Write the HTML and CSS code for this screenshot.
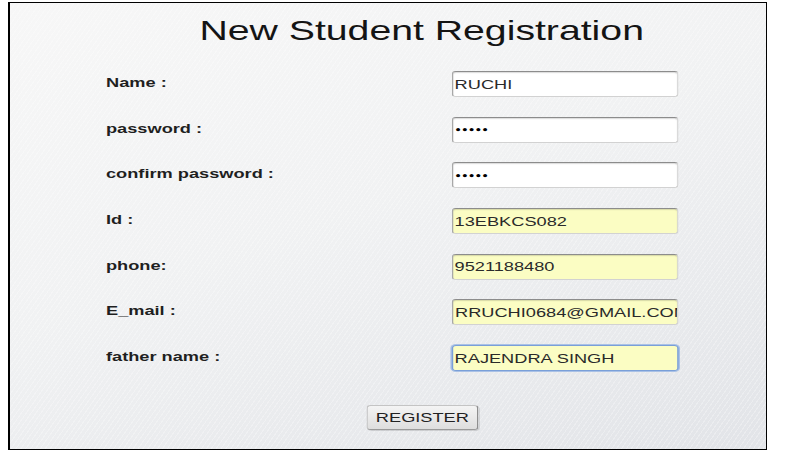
FILE: index.html
```html
<!DOCTYPE html>
<html>
<head>
<meta charset="utf-8">
<title>New Student Registration</title>
<link rel="stylesheet" href="styles.css">
</head>
<body>
<div class="box">
  <div class="sheet">
    <h1 class="title">New Student Registration</h1>
    <form class="form">
      <div class="row"><label class="label">Name :</label><input class="field" type="text" value="RUCHI"></div>
      <div class="row"><label class="label">password :</label><input class="field" type="password" value="12345"></div>
      <div class="row"><label class="label">confirm password :</label><input class="field" type="password" value="12345"></div>
      <div class="row"><label class="label">Id :</label><input class="field filled" type="text" value="13EBKCS082"></div>
      <div class="row"><label class="label">phone:</label><input class="field filled" type="text" value="9521188480"></div>
      <div class="row"><label class="label">E_mail :</label><input class="field filled" type="text" value="RRUCHI0684@GMAIL.COM"></div>
      <div class="row"><label class="label">father name :</label><input class="field filled focused" type="text" value="RAJENDRA SINGH"></div>
      <div class="actions"><button class="btn" type="button">REGISTER</button></div>
    </form>
  </div>
</div>
</body>
</html>
```

FILE: styles.css
```css
html, body {
  margin: 0;
  padding: 0;
  background: #ffffff;
}

body {
  font-family: "Liberation Sans", Arial, sans-serif;
}

.box {
  margin: 2px 0 0 8px;
  width: 756px;
  height: 446px;
  border: 1px solid #000;
  border-left-width: 2px;
  background:
    repeating-linear-gradient(125deg, rgba(255,255,255,0.28) 0 1px, rgba(255,255,255,0) 1px 4px),
    linear-gradient(160deg, #f7f7f7 0%, #f1f2f3 45%, #e2e4e8 100%);
  overflow: hidden;
}

.sheet {
  margin-left: 96px;
  width: 451px;
  transform: scaleX(1.4);
  transform-origin: 0 0;
}

.title {
  margin: 11px 0 0 0;
  font-size: 28px;
  line-height: 34px;
  font-weight: normal;
  color: #141414;
  text-align: center;
}

.form {
  margin: 23px 0 0 0;
  display: flex;
  flex-direction: column;
  gap: 19.7px;
}

.row {
  display: grid;
  grid-template-columns: 247px 162px;
  height: 26px;
  align-items: center;
}

.label {
  font-size: 13px;
  line-height: 15px;
  font-weight: bold;
  color: #1f1f1f;
  padding-bottom: 3px;
}

.field {
  box-sizing: border-box;
  width: 162px;
  height: 26px;
  margin: 0;
  padding: 0 0 0 1px;
  font-family: "Liberation Sans", Arial, sans-serif;
  font-size: 13px;
  color: #2a2a2a;
  background: #ffffff;
  border: 1px solid #d2d2d2;
  border-top-color: #8c8c8c;
  border-left-color: #a8a8a8;
  border-radius: 3px;
  box-shadow: inset 0 1px 1px rgba(0,0,0,0.15);
  outline: none;
}

.field[type="password"] {
  font-family: "DejaVu Sans", sans-serif;
  font-size: 8px;
  font-weight: bold;
  letter-spacing: -0.3px;
  color: #000;
  padding-top: 2px;
}

.filled {
  background: #fbfdc3;
}

.focused {
  border: 1px solid #7a9fd8;
  box-shadow: 0 0 0 1px #a9c1e6;
}

.actions {
  margin-top: 14px;
  display: flex;
  justify-content: center;
}

.btn {
  box-sizing: border-box;
  width: 80px;
  height: 25px;
  margin: 0 0 0 1px;
  padding: 0;
  font-family: "Liberation Sans", Arial, sans-serif;
  font-size: 13px;
  color: #222;
  background: linear-gradient(#f4f4f4, #dedede);
  border: 1px solid #c4c4c4;
  border-right-color: #8e8e8e;
  border-bottom-color: #9a9a9a;
  border-radius: 3px;
  box-shadow: 1px 1px 0 rgba(0,0,0,0.12);
}
```
